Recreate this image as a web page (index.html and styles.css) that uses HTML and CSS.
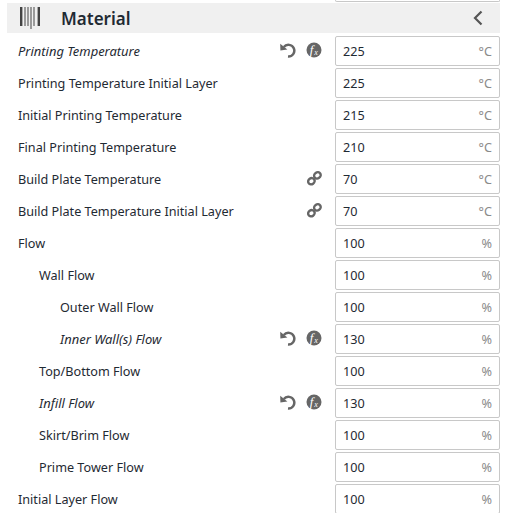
FILE: index.html
```html
<!DOCTYPE html>
<html lang="en">
<head>
<meta charset="utf-8">
<title>Material settings</title>
<link rel="stylesheet" href="styles.css">
</head>
<body>
<svg width="0" height="0" class="defs">
  <defs>
    <symbol id="reset" viewBox="0 0 16 16">
      <path d="M3.8 5 A5.9 5.9 0 1 1 8 14.6" fill="none" stroke="#666" stroke-width="2.5"/>
      <path d="M0.2 1.8 L0.4 8.6 L7.4 7.6 Z" fill="#666"/>
    </symbol>
    <symbol id="fx" viewBox="0 0 16 16">
      <circle cx="8" cy="8" r="7.5" fill="#666"/>
      <text x="3.8" y="12" class="fx-f">f</text>
      <text x="8.2" y="13" class="fx-x">x</text>
    </symbol>
    <symbol id="link" viewBox="0 0 16 16">
      <g fill="none" stroke="#666" stroke-width="2.4">
        <ellipse cx="5.4" cy="11.2" rx="3.4" ry="3" transform="rotate(-35 5.4 11.2)"/>
        <ellipse cx="11.4" cy="5.4" rx="3.4" ry="3" transform="rotate(-35 11.4 5.4)"/>
      </g>
    </symbol>
  </defs>
</svg>
<main class="panel">
  <div class="stub"></div>
  <header class="section">
    <svg class="barcode" width="21" height="22" viewBox="0 0 21 22">
      <g fill="#444">
        <rect x="0" y="0" width="2.4" height="19"/>
        <rect x="4.5" y="0" width="1" height="19"/>
        <rect x="7.5" y="0" width="1" height="19"/>
        <rect x="10.5" y="0" width="1" height="22"/>
        <rect x="13.5" y="0" width="1" height="19"/>
        <rect x="17.6" y="0" width="2.4" height="19"/>
      </g>
    </svg>
    <h2 class="section-title">Material</h2>
    <svg class="chevron" width="12" height="16" viewBox="0 0 12 16">
      <path d="M9.5 1.5 L3 8 L9.5 14.5" fill="none" stroke="#555" stroke-width="2.2"/>
    </svg>
  </header>

  <div class="row">
    <span class="label changed">Printing Temperature</span>
    <svg class="icon reset-icon"><use href="#reset"/></svg>
    <svg class="icon fx-icon"><use href="#fx"/></svg>
    <div class="field"><span>225</span><span class="unit">°C</span></div>
  </div>
  <div class="row">
    <span class="label">Printing Temperature Initial Layer</span>
    <div class="field"><span>225</span><span class="unit">°C</span></div>
  </div>
  <div class="row">
    <span class="label">Initial Printing Temperature</span>
    <div class="field"><span>215</span><span class="unit">°C</span></div>
  </div>
  <div class="row">
    <span class="label">Final Printing Temperature</span>
    <div class="field"><span>210</span><span class="unit">°C</span></div>
  </div>
  <div class="row">
    <span class="label">Build Plate Temperature</span>
    <svg class="icon link-icon"><use href="#link"/></svg>
    <div class="field"><span>70</span><span class="unit">°C</span></div>
  </div>
  <div class="row">
    <span class="label">Build Plate Temperature Initial Layer</span>
    <svg class="icon link-icon"><use href="#link"/></svg>
    <div class="field"><span>70</span><span class="unit">°C</span></div>
  </div>
  <div class="row">
    <span class="label">Flow</span>
    <div class="field"><span>100</span><span class="unit">%</span></div>
  </div>
  <div class="row indent-1">
    <span class="label">Wall Flow</span>
    <div class="field"><span>100</span><span class="unit">%</span></div>
  </div>
  <div class="row indent-2">
    <span class="label">Outer Wall Flow</span>
    <div class="field"><span>100</span><span class="unit">%</span></div>
  </div>
  <div class="row indent-2">
    <span class="label changed">Inner Wall(s) Flow</span>
    <svg class="icon reset-icon"><use href="#reset"/></svg>
    <svg class="icon fx-icon"><use href="#fx"/></svg>
    <div class="field"><span>130</span><span class="unit">%</span></div>
  </div>
  <div class="row indent-1">
    <span class="label">Top/Bottom Flow</span>
    <div class="field"><span>100</span><span class="unit">%</span></div>
  </div>
  <div class="row indent-1">
    <span class="label changed">Infill Flow</span>
    <svg class="icon reset-icon"><use href="#reset"/></svg>
    <svg class="icon fx-icon"><use href="#fx"/></svg>
    <div class="field"><span>130</span><span class="unit">%</span></div>
  </div>
  <div class="row indent-1">
    <span class="label">Skirt/Brim Flow</span>
    <div class="field"><span>100</span><span class="unit">%</span></div>
  </div>
  <div class="row indent-1">
    <span class="label">Prime Tower Flow</span>
    <div class="field"><span>100</span><span class="unit">%</span></div>
  </div>
  <div class="row">
    <span class="label">Initial Layer Flow</span>
    <div class="field"><span>100</span><span class="unit">%</span></div>
  </div>
</main>
</body>
</html>
```
FILE: styles.css
```css
html, body {
  margin: 0;
  padding: 0;
  height: 513px;
  overflow: hidden;
  background: #fff;
}

.defs {
  display: block;
  height: 0;
}

.panel {
  width: 500px;
  display: flex;
  flex-direction: column;
  gap: 2px;
  font-family: "Noto Sans", sans-serif;
  font-size: 12.65px;
  color: #1f2a33;
}

.stub {
  height: 2px;
  margin-left: 335px;
  border: 1px solid #c8c8c8;
  border-top: none;
  border-radius: 0 0 2px 2px;
  box-sizing: border-box;
}

.section {
  height: 30px;
  margin: -1px 0 1px 7px;
  display: flex;
  align-items: center;
  background: #f0f0f0;
}

.barcode {
  margin-left: 13px;
}

.section-title {
  margin: 0 0 0 20px;
  font-size: 17px;
  font-weight: 600;
  flex: 1;
  color: #1f2a33;
}

.chevron {
  margin-right: 16px;
}

.row {
  height: 30px;
  display: flex;
  align-items: center;
  padding-left: 18px;
}

.indent-1 { padding-left: 39px; }
.indent-2 { padding-left: 60px; }

.label {
  flex: 1;
  white-space: nowrap;
}

.changed {
  font-style: italic;
  font-size: 12.95px;
}

.icon {
  width: 16px;
  height: 16px;
  flex: none;
  margin-bottom: 2px;
}

.reset-icon { margin-right: 10px; }
.fx-icon { margin-right: 13px; }
.link-icon { margin-right: 13px; margin-bottom: 3px; }

.field {
  box-sizing: border-box;
  flex: none;
  width: 165px;
  height: 30px;
  display: flex;
  align-items: center;
  justify-content: space-between;
  padding: 0 7px;
  border: 1px solid #c8c8c8;
  border-radius: 2px;
  background: #fff;
}

.unit {
  color: #8a8a8a;
}

.fx-f {
  font: italic 13px "Liberation Serif", serif;
  fill: #fff;
}

.fx-x {
  font: italic 8px "Liberation Serif", serif;
  fill: #fff;
}
```
